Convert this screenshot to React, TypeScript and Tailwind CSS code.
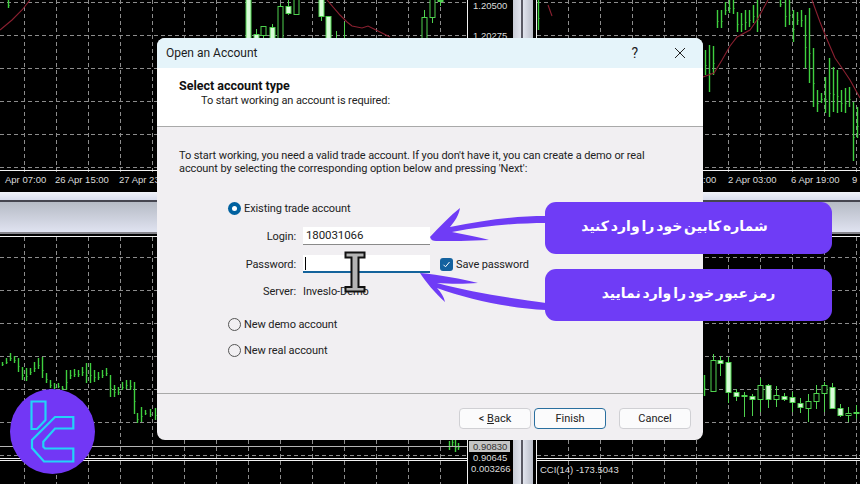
import React from "react";

const range = (a: number, b: number, s: number) => {
  const o: number[] = [];
  for (let i = a; i <= b; i += s) o.push(i);
  return o;
};

const G = "#4fd24f";

function Grid({ xs, ys, x1, x2, y1, y2 }: { xs: number[]; ys: number[]; x1: number; x2: number; y1: number; y2: number }) {
  return (
    <g stroke="#8c8c8c" strokeWidth="1" strokeDasharray="4 3" fill="none">
      {ys.map((y) => (
        <line key={"h" + y} x1={x1} x2={x2} y1={y + 0.5} y2={y + 0.5} />
      ))}
      {xs.map((x) => (
        <line key={"v" + x} x1={x + 0.5} x2={x + 0.5} y1={y1} y2={y2} />
      ))}
    </g>
  );
}

function Bars({ data }: { data: number[][] }) {
  return (
    <g stroke="#3fd03f" strokeWidth="1.4" fill="none">
      {data.map(([x, a, b], i) => (
        <g key={i}>
          <line x1={x + 0.5} x2={x + 0.5} y1={a} y2={b} />
          <line x1={x + 0.5} x2={x + 1.5} y1={Math.round(a + (b - a) * 0.6) + 0.5} y2={Math.round(a + (b - a) * 0.6) + 0.5} strokeWidth="1" />
        </g>
      ))}
    </g>
  );
}

// x, wickTop, wickBottom, bodyTop, bodyBottom, kind (0 hollow, 1 light)
function Candles({ data }: { data: number[][] }) {
  return (
    <g stroke={G} strokeWidth="1">
      {data.map(([x, wt, wb, bt, bb, k], i) => (
        <g key={i}>
          <line x1={x + 0.5} x2={x + 0.5} y1={wt} y2={wb} />
          <rect x={x - 2} y={bt + 0.5} width={5} height={Math.max(bb - bt, 1)} fill={k ? "#d8fbd8" : "#000"} />
        </g>
      ))}
    </g>
  );
}

const Red = ({ d }: { d: string }) => <path d={d} stroke="#8a2030" strokeWidth="1.1" fill="none" />;

const axisText = { fill: "#dcdcdc", fontSize: 9.5, fontFamily: "'Liberation Sans', sans-serif" };

function TopLeftChart() {
  const bars = [[8, 0, 8]];
  const candles = [
    [248, -5, 40, -5, 40, 1],
    [256, 29, 40, 34, 40, 1],
    [263, 26, 38, 26, 35, 0],
    [272, 24, 40, 27, 40, 1],
    [280, 4, 40, 6, 40, 0],
    [288, 0, 15, 6, 13, 1],
    [296, 0, 14, -2, 14, 0],
    [321, 0, 21, -2, 16, 1],
    [328, 16, 40, 16, 40, 1],
    [336, 31, 40, 40, 40, 0],
    [344, 22, 40, 40, 40, 0],
    [424, 10, 40, 17, 40, 0],
    [432, 0, 23, -2, 17, 0],
    [440, 0, 6, 0, 0, 0],
  ];
  return (
    <svg viewBox="0 0 513 192" className="block w-[513px] h-[192px] bg-black shrink-0">
      <Grid xs={range(24, 440, 32)} ys={range(2, 167, 33)} x1={0} x2={467} y1={0} y2={173} />
      <Red d="M0 30 L12 20 L22 10 L30 0" />
      <Red d="M327 0 L340 15 L347 22 L352 26 L362 28 L368 26 L376 30 L390 37" />
      <Bars data={bars} />
      <Candles data={candles} />
      <line x1="0" x2="467.5" y1="170.5" y2="170.5" stroke="#f2f2f2" />
      <line x1="467.5" x2="467.5" y1="0" y2="171" stroke="#f2f2f2" />
      <text x="5" y="183" {...axisText}>Apr 07:00</text>
      <text x="55" y="183" {...axisText}>26 Apr 15:00</text>
      <text x="119" y="183" {...axisText}>27 Apr 23:00</text>
      <text x="473" y="8.5" {...axisText}>1.20500</text>
      <text x="473" y="39" {...axisText}>1.20275</text>
    </svg>
  );
}

function TopRightChart() {
  const bars = [
    [538, 0, 30], [705, 50, 75], [709, 45, 92], [713, 46, 75], [717, 10, 28], [721, 10, 28], [725, 2, 15], [729, 0, 13], [733, 0, 14],
    [737, 12, 32], [741, 13, 32], [745, 10, 30], [749, 10, 27], [753, 5, 23], [757, 0, 32], [780, 0, 7], [785, 0, 27],
    [789, 0, 25], [793, 10, 42], [797, 12, 25], [801, 10, 27], [805, 15, 68], [809, 8, 83], [813, 48, 107], [817, 90, 112],
    [821, 93, 103], [825, 77, 113], [829, 58, 117], [833, 67, 112], [837, 70, 113], [841, 90, 112], [845, 88, 113],
    [849, 87, 107], [853, 102, 161], [857, 107, 138],
  ];
  return (
    <svg viewBox="533 0 327 192" className="block flex-1 h-[192px] bg-black">
      <Grid xs={range(568, 856, 32)} ys={range(2, 167, 33)} x1={537} x2={860} y1={0} y2={173} />
      <Bars data={bars} />
      <Red d="M548 5 L552 16" />
      <Red d="M703 77 L714 73 L722 60 L730 46 L737 37 L750 30 L757 20 L768 0" />
      <Red d="M812 0 L820 22 L826 37 L835 58 L842 68 L850 80 L860 98" />
      <line x1="536" x2="860" y1="170.5" y2="170.5" stroke="#f2f2f2" />
      <line x1="536.5" x2="536.5" y1="0" y2="171" stroke="#f2f2f2" />
      <text x="703" y="183" {...axisText}>:00</text>
      <text x="728" y="183" {...axisText}>2 Apr 03:00</text>
      <text x="791" y="183" {...axisText}>6 Apr 19:00</text>
      <text x="852" y="183" {...axisText}>9</text>
    </svg>
  );
}

function BottomLeftChart() {
  const ys = [
    362, 358, 353, 356, 358, 367, 368, 368, 362, 358, 357, 373, 380, 383, 383, 386, 370, 370, 369, 370, 367, 363, 363, 370, 372, 370,
    368, 375, 385, 387, 382, 380, 380, 382,
  ];
  const hs = [4, 6, 8, 7, 14, 13, 13, 7, 10, 11, 21, 10, 8, 6, 5, 4, 20, 9, 8, 7, 9, 20, 20, 12, 8, 8, 8, 22, 12, 8, 8, 9, 10, 32];
  const bars = ys.map((y, i) => [2 + i * 4, y, y + hs[i]]);
  const more = [
    [137, 413, 423], [141, 407, 422], [145, 410, 415], [150, 409, 417], [155, 408, 420],
    [449, 441, 450], [452, 437, 446], [455, 440, 452], [458, 443, 450],
  ];
  return (
    <svg viewBox="0 236 513 248" className="block w-[513px] h-[248px] bg-black shrink-0">
      <Grid xs={range(24, 440, 32)} ys={range(257, 455, 33)} x1={0} x2={467} y1={237} y2={484} />
      <Bars data={[...bars, ...more]} />
      <line x1="0" x2="467" y1="446.5" y2="446.5" stroke="#b5b5b5" />
      <line x1="0" x2="467" y1="458.5" y2="458.5" stroke="#f2f2f2" />
      <line x1="0" x2="467" y1="460.5" y2="460.5" stroke="#f2f2f2" />
      <line x1="0" x2="513" y1="236.5" y2="236.5" stroke="#f2f2f2" />
      <line x1="467.5" x2="467.5" y1="236" y2="484" stroke="#f2f2f2" />
      <rect x="469" y="441" width="41" height="11" fill="#c4c4c4" />
      <text x="473" y="450" {...axisText} fill="#333">0.90830</text>
      <text x="473" y="461" {...axisText}>0.90645</text>
      <text x="471" y="471.5" {...axisText}>0.003266</text>
    </svg>
  );
}

function BottomRightChart() {
  const c = [
    [713, 354, 392, 360, 391, 0], [720, 356, 376, 360, 363, 1], [728, 357, 403, 362, 392, 1], [736, 389, 401, 392, 396, 1],
    [744, 392, 417, 395, 396, 1], [752, 394, 416, 396, 399, 1], [760, 378, 412, 385, 399, 0], [768, 384, 408, 385, 399, 1],
    [776, 386, 407, 395, 399, 0], [784, 393, 401, 396, 399, 1], [792, 392, 412, 397, 402, 1], [800, 398, 413, 403, 407, 1],
    [808, 394, 422, 401, 408, 0], [816, 385, 409, 393, 401, 0], [824, 382, 412, 385, 393, 0], [832, 383, 408, 387, 408, 1],
    [840, 404, 417, 408, 415, 1], [848, 407, 422, 413, 415, 0], [856, 405, 419, 412, 413, 1],
  ];
  return (
    <svg viewBox="533 236 327 248" className="block flex-1 h-[248px] bg-black">
      <Grid xs={range(568, 856, 32)} ys={range(257, 455, 33)} x1={537} x2={860} y1={237} y2={484} />
      <Bars data={[[704, 375, 396]]} />
      <Candles data={c} />
      <line x1="533" x2="860" y1="236.5" y2="236.5" stroke="#f2f2f2" />
      <line x1="536.5" x2="536.5" y1="236" y2="484" stroke="#f2f2f2" />
      <line x1="536" x2="860" y1="458.5" y2="458.5" stroke="#f2f2f2" />
      <line x1="536" x2="860" y1="460.5" y2="460.5" stroke="#f2f2f2" />
      <text x="540" y="473" {...axisText}>CCI(14) -173.5043</text>
    </svg>
  );
}

const Splitter = () => (
  <div className="w-[20px] shrink-0 flex bg-[#c9ced9]">
    <div className="w-[8px] bg-gradient-to-r from-[#c8ccd6] to-[#e2e5ee]" />
    <div className="w-[2px] bg-[#5a5a64]" />
    <div className="flex-1 bg-gradient-to-r from-[#e2e5ee] to-[#b9bdc8]" />
  </div>
);

const Radio = ({ on, label }: { on?: boolean; label: string }) => (
  <div className="flex items-center h-[16px] ml-[71px] gap-[3px]">
    {on ? (
      <span className="w-[13px] h-[13px] rounded-full bg-[#00619f] flex items-center justify-center">
        <span className="w-[5px] h-[5px] rounded-full bg-white" />
      </span>
    ) : (
      <span className="w-[13px] h-[13px] rounded-full border border-[#555]" />
    )}
    <span>{label}</span>
  </div>
);

const Btn = ({ children, primary, className = "" }: { children: React.ReactNode; primary?: boolean; className?: string }) => (
  <div
    className={
      "w-[72px] h-[21px] rounded-[4px] bg-[#fbfbfc] flex items-center justify-center " +
      (primary ? "border-[1.5px] border-[#2a6f9f] " : "border border-[#d0d0d4] ") +
      className
    }
  >
    {children}
  </div>
);

function Dialog() {
  return (
    <div className="absolute left-[157px] top-[38px] w-[546px] h-[402px] rounded-[8px] overflow-hidden bg-[#f1eff2] flex flex-col text-[11px] leading-[13px] tracking-[-0.1px] text-[#222] font-['Roboto',sans-serif]">
      <div className="h-[30px] bg-[#e5f4fa] flex items-center pl-[9px] text-[12px] tracking-normal text-[#1c1c1c]">
        <span>Open an Account</span>
        <span className="ml-auto mr-[36px] text-[14px]">?</span>
        <svg width="12" height="12" viewBox="0 0 12 12" className="mr-[17px]" fill="none" stroke="#222" strokeWidth="1">
          <path d="M1 1 L11 11 M11 1 L1 11" />
        </svg>
      </div>
      <div className="h-[59px] bg-white border-b border-[#a9a9a9] pl-[22px] pt-[11px]">
        <div className="font-bold text-[#111] text-[12.5px] tracking-normal">Select account type</div>
        <div className="pl-[22px] mt-[2px]">To start working an account is required:</div>
      </div>
      <div className="flex-1 flex flex-col">
        <p className="pl-[22px] pt-[22px] whitespace-pre-line">
          {"To start working, you need a valid trade account. If you don't have it, you can create a demo or real\naccount by selecting the corresponding option below and pressing 'Next':"}
        </p>
        <div className="mt-[25px]">
          <Radio on label="Existing trade account" />
        </div>
        <div className="flex items-center mt-[11px] h-[18px]">
          <span className="w-[139px] text-right">Login:</span>
          <div className="ml-[7px] w-[127px] h-[18px] bg-white border-b border-[#8a8a8a] pl-[3px] flex items-center text-[11.5px]">180031066</div>
        </div>
        <div className="flex items-center mt-[10px] h-[18px]">
          <span className="w-[139px] text-right">Password:</span>
          <div className="ml-[7px] w-[127px] h-[18px] bg-white border-b-2 border-[#14639c] pl-[2px] flex items-center">
            <span className="w-px h-[13px] bg-black" />
          </div>
          <span className="ml-[10px] w-[13px] h-[13px] rounded-[3px] bg-[#14629f] flex items-center justify-center">
            <svg width="9" height="9" viewBox="0 0 9 9" fill="none" stroke="#fff" strokeWidth="1">
              <path d="M1.5 4.8 L3.5 6.8 L7.5 2" />
            </svg>
          </span>
          <span className="ml-[3px]">Save password</span>
        </div>
        <div className="flex items-center mt-[11px] h-[14px]">
          <span className="w-[139px] text-right">Server:</span>
          <span className="ml-[7px]">Inveslo-Demo</span>
        </div>
        <div className="mt-[18px]">
          <Radio label="New demo account" />
        </div>
        <div className="mt-[10px]">
          <Radio label="New real account" />
        </div>
        <div className="mt-auto h-[47px] border-t border-[#a9a9a9] flex items-start pt-[14px] pl-[302px] text-[11px] tracking-normal">
          <Btn>
            &lt;&nbsp;<span className="underline">B</span>ack
          </Btn>
          <Btn primary className="ml-[3px]">Finish</Btn>
          <Btn className="ml-[13px]">Cancel</Btn>
        </div>
      </div>
    </div>
  );
}

const Pill = ({ children, className = "" }: { children: React.ReactNode; className?: string }) => (
  <div
    dir="rtl"
    className={
      "absolute left-[545px] w-[287px] h-[52px] pb-[3px] rounded-[11px] bg-[#6f3cf6] text-white flex items-center justify-center text-[14px] font-bold [word-spacing:-3px] font-['DejaVu_Sans',sans-serif] " +
      className
    }
  >
    {children}
  </div>
);

export default function App() {
  return (
    <div className="relative w-[860px] h-[484px] overflow-hidden bg-black flex flex-col">
      <div className="flex h-[192px]">
        <TopLeftChart />
        <Splitter />
        <TopRightChart />
      </div>
      <div className="h-[44px] flex flex-col">
        <div className="h-[8px] bg-gradient-to-b from-[#f1f3fa] to-[#d8dcec]" />
        <div className="h-[2px] bg-[#45454f]" />
        <div className="h-[30px] bg-gradient-to-b from-[#b6bbc5] to-[#e0e3f1]" />
        <div className="h-[2px] bg-[#85858c]" />
        <div className="h-[2px] bg-black" />
      </div>
      <div className="flex h-[248px]">
        <BottomLeftChart />
        <Splitter />
        <BottomRightChart />
      </div>

      <Dialog />

      {/* I-beam cursor */}
      <svg className="absolute left-[342px] top-[249px]" width="26" height="46" viewBox="342 249 26 46">
        <path
          d="M345.5 252.5 H364.5 V257.5 H358.5 V287 H364.5 V291.5 H345.5 V287 H351.5 V257.5 H345.5 Z"
          fill="#b4b4b4"
          stroke="#111"
          strokeWidth="2"
        />
      </svg>

      {/* arrows */}
      <svg className="absolute left-[415px] top-[200px]" width="135" height="115" viewBox="415 200 135 115">
        <path
          d="M546 216 C515 216 485 220 450 227 C455 221 459 215 460 208 C450 216 440 226 430 237 C431 240 433 241 436 241 C450 241 470 241 489 240 C480 237 465 235 452 232 C485 226 515 223 546 223 Z"
          fill="#6f3cf6"
        />
        <path
          d="M546 303 C515 299 470 292 437 283 C450 284 465 284 478 283 C462 279 440 275 420 273 C426 282 434 292 445 302 C444 297 441 292 437 288 C470 300 510 308 546 310 Z"
          fill="#6f3cf6"
        />
      </svg>

      <Pill className="top-[202px] pr-[28px]">شماره کابین خود را وارد کنید</Pill>
      <Pill className="top-[269px]">رمز عبور خود را وارد نمایید</Pill>

      {/* logo */}
      <svg className="absolute left-[10px] top-[389px]" width="85" height="85" viewBox="10 389 85 85">
        <circle cx="52.5" cy="431.5" r="42.5" fill="#7237f5" />
        <g fill="none" stroke="#22d3f7" strokeWidth="2.2" strokeLinejoin="miter">
          <path d="M73.3 417 H55 L32 440 V448 L44 461.5 H73.3 V448.5 H45 L43.3 446.7 V441.7 L55 428.5 H73.3 Z" />
          <path d="M31.5 401.5 H45.5 V420 L37 429 H31.5 Z" />
        </g>
      </svg>
    </div>
  );
}
